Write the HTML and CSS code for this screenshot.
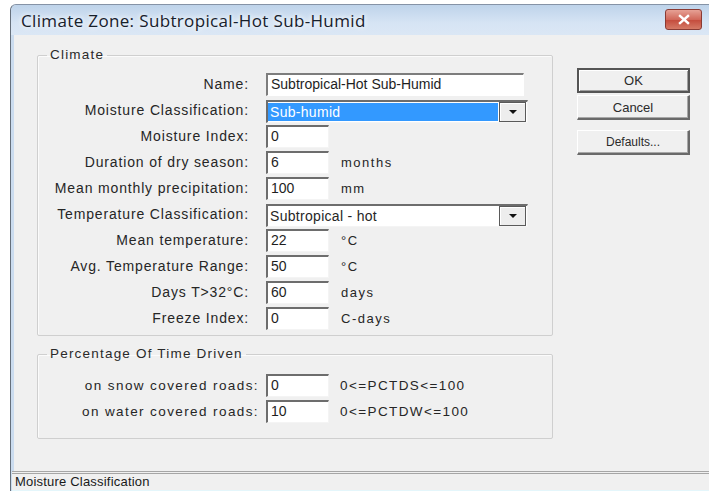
FILE: index.html
```html
<!DOCTYPE html>
<html lang="en">
<head>
<meta charset="utf-8">
<title>Climate Zone</title>
<link rel="stylesheet" href="styles.css">
</head>
<body>
<div class="window">
  <div class="titlebar">
    <span class="title">Climate Zone: Subtropical-Hot Sub-Humid</span>
    <span class="close">
      <svg width="14" height="11" viewBox="0 0 14 11"><path d="M3 2 L11 9 M11 2 L3 9" stroke="#fff" stroke-width="2.4" stroke-linecap="square"/></svg>
    </span>
  </div>
  <div class="client">
    <div class="groups">
      <fieldset class="group climate">
        <legend>Climate</legend>
        <div class="row"><label>Name:</label><span class="edit wide">Subtropical-Hot Sub-Humid</span></div>
        <div class="row"><label>Moisture Classification:</label>
          <span class="combo"><span class="combo-text selected">Sub-humid</span><span class="drop"><i></i></span></span></div>
        <div class="row"><label>Moisture Index:</label><span class="edit">0</span></div>
        <div class="row"><label>Duration of dry season:</label><span class="edit">6</span><span class="unit">months</span></div>
        <div class="row"><label>Mean monthly precipitation:</label><span class="edit">100</span><span class="unit">mm</span></div>
        <div class="row"><label>Temperature Classification:</label>
          <span class="combo"><span class="combo-text">Subtropical - hot</span><span class="drop"><i></i></span></span></div>
        <div class="row"><label>Mean temperature:</label><span class="edit">22</span><span class="unit">°C</span></div>
        <div class="row"><label>Avg. Temperature Range:</label><span class="edit">50</span><span class="unit">°C</span></div>
        <div class="row"><label>Days T&gt;32°C:</label><span class="edit">60</span><span class="unit">days</span></div>
        <div class="row"><label>Freeze Index:</label><span class="edit">0</span><span class="unit">C-days</span></div>
      </fieldset>
      <fieldset class="group driven">
        <legend>Percentage Of Time Driven</legend>
        <div class="row"><label>on snow covered roads:</label><span class="edit">0</span><span class="unit">0&lt;=PCTDS&lt;=100</span></div>
        <div class="row"><label>on water covered roads:</label><span class="edit">10</span><span class="unit">0&lt;=PCTDW&lt;=100</span></div>
      </fieldset>
    </div>
    <div class="buttons">
      <button class="btn default">OK</button>
      <button class="btn">Cancel</button>
      <button class="btn defaults">Defaults...</button>
    </div>
  </div>
  <div class="statusbar">Moisture Classification</div>
</div>
</body>
</html>
```

FILE: styles.css
```css
* { box-sizing: border-box; }

html, body {
  margin: 0;
  height: 100%;
  background: #ffffff;
  overflow: hidden;
}

body {
  font-family: "Liberation Sans", Arial, sans-serif;
  font-size: 14px;
  color: #262626;
}

/* dialog frame */
.window {
  margin: 4px 0 0 10px;
  height: calc(100% - 4px);
  display: flex;
  flex-direction: column;
  border-top: 1px solid #8593a6;
  border-left: 1px solid #66707c;
  border-radius: 6px 0 0 0;
  background: #cbdcef;
  padding-left: 3px;
}

.titlebar {
  height: 30px;
  flex: none;
  display: flex;
  align-items: center;
  background: linear-gradient(#bed3ea, #d6e4f4 60%, #dbe7f5);
  margin-left: -3px;
  padding-left: 10px;
  border-radius: 6px 0 0 0;
}

.title {
  font-family: "Open Sans", "Noto Sans", sans-serif;
  font-size: 17px;
  color: #17202b;
  letter-spacing: 0.35px;
  text-shadow: 0 0 4px #f2f7fc, 0 0 6px #f2f7fc;
}

.close {
  margin-left: auto;
  margin-right: 7px;
  margin-top: -2px;
  width: 37px;
  height: 21px;
  border: 1px solid #8a3b34;
  border-radius: 3px;
  background: linear-gradient(#e6a195, #d1685a 50%, #c44b3c 52%, #d57a66);
  display: flex;
  align-items: center;
  justify-content: center;
}

.client {
  flex: 1;
  display: flex;
  background: #f0f0f0;
  padding: 12px 0 0 23px;
  gap: 24px;
}

.groups {
  width: 516px;
  display: flex;
  flex-direction: column;
  gap: 10px;
}

.group {
  margin: 0;
  padding: 0;
  border: 1px solid #cfcfcf;
  border-radius: 2px;
  box-shadow: inset 1px 1px 0 #fbfbfb;
}

.group legend {
  margin-left: 9px;
  padding: 0 3px;
  line-height: 16px;
  font-size: 13.5px;
  letter-spacing: 1.2px;
  color: #2a2a2a;
}

.climate { padding: 10px 0 2px 0; }
.driven { padding: 12px 0 12px 0; }

.row {
  height: 26px;
  display: flex;
  align-items: flex-start;
}

.row label {
  width: 211px;
  margin-right: 17px;
  text-align: right;
  line-height: 23px;
  letter-spacing: 0.85px;
  white-space: nowrap;
}

.driven .row label {
  width: 221px;
  margin-right: 7px;
  letter-spacing: 1.4px;
  font-size: 13.5px;
}

/* sunken edit field */
.edit {
  width: 63px;
  height: 23px;
  background: #ffffff;
  border-top: 2px solid #6d6d6d;
  border-left: 2px solid #6d6d6d;
  border-right: 1px solid #f4f4f4;
  border-bottom: 1px solid #f4f4f4;
  padding-left: 3px;
  line-height: 19px;
  color: #1e1e1e;
  white-space: nowrap;
}

.edit.wide {
  width: 258px;
  border-color: #7d7d7d #ffffff #ffffff #7d7d7d;
}

.unit {
  margin-left: 12px;
  line-height: 24px;
  font-size: 13px;
  letter-spacing: 1.5px;
  white-space: nowrap;
}

.driven .unit {
  font-size: 13.5px;
  letter-spacing: 1.4px;
  margin-left: 11px;
}

/* drop-down list */
.combo {
  width: 262px;
  height: 23px;
  margin-top: 1px;
  display: flex;
  background: #ffffff;
  border-top: 2px solid #6d6d6d;
  border-left: 2px solid #6d6d6d;
  border-right: 1px solid #f4f4f4;
  border-bottom: 1px solid #f4f4f4;
}

.combo-text {
  flex: 1;
  padding-left: 2px;
  line-height: 19px;
  margin: 1px 1px 1px 0;
  letter-spacing: 0.3px;
}

.combo-text.selected {
  background: #3399ff;
  color: #ffffff;
}

.drop {
  width: 27px;
  flex: none;
  margin: 0 1px 0 0;
  background: #ededed;
  border: 1px solid #5a5a5a;
  box-shadow: inset 1px 1px 0 #ffffff;
  display: flex;
  align-items: center;
  justify-content: center;
}

.drop i {
  width: 0;
  height: 0;
  border-left: 4px solid transparent;
  border-right: 4px solid transparent;
  border-top: 4px solid #111111;
}

/* command buttons */
.buttons {
  display: flex;
  flex-direction: column;
  padding-top: 21px;
  width: 113px;
}

.btn {
  font-family: "Liberation Sans", Arial, sans-serif;
  font-size: 13px;
  color: #2b2b2b;
  height: 25px;
  padding: 0;
  background: #f0f0f0;
  border-top: 1px solid #ffffff;
  border-left: 1px solid #ffffff;
  border-right: 2px solid #6a6a6a;
  border-bottom: 2px solid #6a6a6a;
  box-shadow: inset -1px -1px 0 #a8a8a8;
}

.btn.default {
  border: 2px solid #555555;
  box-shadow: inset 1px 1px 0 #ffffff, inset -1px -1px 0 #a0a0a0;
}

.btn + .btn { margin-top: 2px; }
.btn.defaults { margin-top: 10px; font-size: 12px; }

.statusbar {
  flex: none;
  height: 20px;
  margin-left: -2px;
  background: linear-gradient(#f0f0f0 16px, #e4f6fb 16px);
  border-top: 3px double #a6a6a6;
  padding-left: 3px;
  font-size: 13px;
  letter-spacing: 0.2px;
  line-height: 15px;
  color: #1a1a1a;
}
```
